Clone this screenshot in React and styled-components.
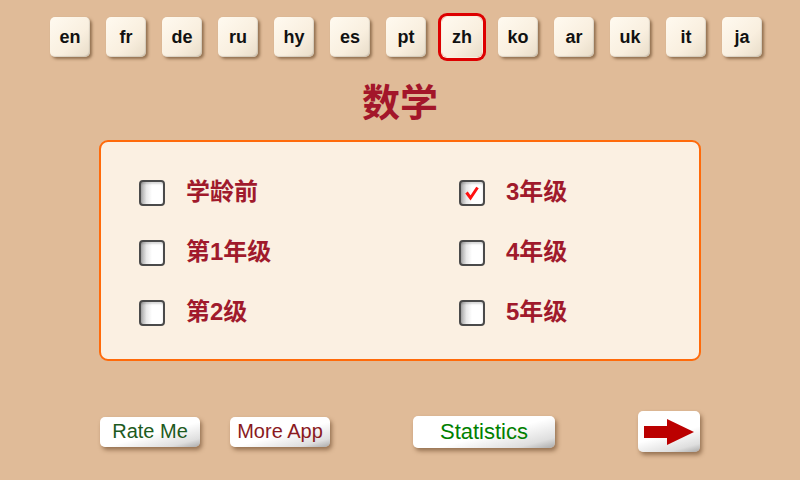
import React, { useState } from "react";
import styled, { createGlobalStyle } from "styled-components";

const GlobalStyle = createGlobalStyle`
  html, body {
    margin: 0;
    padding: 0;
    background-color: #e0bb98;
  }
  body {
    font-family: "Liberation Sans", "Noto Sans CJK SC", sans-serif;
  }
`;

const Page = styled.div`
  width: 800px;
  height: 480px;
  overflow: hidden;
  display: flex;
  flex-direction: column;
  align-items: center;
  background-color: #e0bb98;
`;

const LangRow = styled.div`
  display: flex;
  align-items: center;
  gap: 16px;
  height: 48px;
  margin: 13px 0 0 12px;
`;

const LangButton = styled.button`
  width: 40px;
  height: 40px;
  padding: 0;
  border: none;
  border-radius: 5px;
  background: linear-gradient(135deg, #fffaf0 0%, #f9efdf 60%, #e8dcc8 100%);
  box-shadow: ${({ $active }) =>
    $active
      ? "0 0 0 1px #f9efdf, 0 0 0 4px #dd0000"
      : "2px 2px 3px rgba(80, 50, 20, 0.55), inset -1px -1px 1px rgba(0,0,0,0.12)"};
  font-family: "Liberation Sans", Arial, sans-serif;
  font-weight: bold;
  font-size: 18px;
  color: #111;
  cursor: pointer;
  line-height: 40px;
`;

const Title = styled.h1`
  margin: 17px 0 0;
  height: 44px;
  line-height: 44px;
  font-family: "Noto Sans CJK SC", sans-serif;
  font-weight: bold;
  font-size: 38px;
  color: #a3162a;
`;

const Panel = styled.div`
  box-sizing: border-box;
  width: 602px;
  height: 221px;
  margin-top: 18px;
  border: 2px solid #ff6a0a;
  border-radius: 9px;
  background-color: #fbf0e2;
  padding: 38px 0 0 38px;
  display: grid;
  grid-template-columns: 320px 240px;
  grid-auto-rows: 60px;
`;

const Option = styled.label`
  display: flex;
  align-items: center;
  gap: 21px;
  height: 26px;
  cursor: pointer;
`;

const Box = styled.span`
  box-sizing: border-box;
  width: 26px;
  height: 26px;
  border: 2px solid #4a4a4a;
  border-radius: 4px;
  background: linear-gradient(90deg, #a8a8a8 0%, #e8e8e8 25%, #ffffff 50%);
  box-shadow: inset 0 2px 2px rgba(0, 0, 0, 0.15);
  display: flex;
  align-items: center;
  justify-content: center;
`;

const OptionText = styled.span`
  font-family: "Liberation Sans", "Noto Sans CJK SC", sans-serif;
  font-weight: bold;
  font-size: 24px;
  line-height: 26px;
  margin-top: -3px;
  color: #a01a2c;
`;

const BottomRow = styled.div`
  width: 600px;
  height: 41px;
  margin-top: 50px;
  display: flex;
  align-items: center;
  justify-content: space-between;
`;

const Group = styled.div`
  display: flex;
  align-items: center;
  gap: 30px;
`;

const WhiteButton = styled.button`
  box-sizing: border-box;
  width: ${({ $w }) => $w}px;
  height: ${({ $h }) => $h}px;
  padding: 0;
  border: none;
  border-radius: 5px;
  background: linear-gradient(165deg, #ffffff 0%, #ffffff 55%, #dedede 85%, #aaaaaa 100%);
  box-shadow: 2px 3px 4px rgba(90, 55, 25, 0.55);
  font-family: "Liberation Sans", Arial, sans-serif;
  font-size: ${({ $size }) => $size}px;
  color: ${({ $color }) => $color};
  cursor: pointer;
  display: flex;
  align-items: center;
  justify-content: center;
`;

const langs = ["en", "fr", "de", "ru", "hy", "es", "pt", "zh", "ko", "ar", "uk", "it", "ja"];

const grades = [
  ["学龄前", "3年级"],
  ["第1年级", "4年级"],
  ["第2级", "5年级"],
];

const Check = () => (
  <svg width="16" height="16" viewBox="0 0 16 16">
    <path d="M2.5 7.5 L6.5 13 L13.5 2.5" fill="none" stroke="#ff1010" strokeWidth="3" strokeLinejoin="miter" />
  </svg>
);

const Arrow = () => (
  <svg width="50" height="26" viewBox="0 0 50 26">
    <rect x="0" y="7" width="24" height="12" fill="#bb0000" />
    <polygon points="23,0 50,13 23,26" fill="#bb0000" />
  </svg>
);

export default function App() {
  const [lang, setLang] = useState("zh");
  const [checked, setChecked] = useState({ "3年级": true });

  const toggle = (k) => setChecked((prev) => ({ ...prev, [k]: !prev[k] }));

  return (
    <Page>
      <GlobalStyle />
      <LangRow>
        {langs.map((l) => (
          <LangButton key={l} $active={l === lang} onClick={() => setLang(l)}>
            {l}
          </LangButton>
        ))}
      </LangRow>
      <Title>数学</Title>
      <Panel>
        {grades.flat().map((g) => (
          <Option key={g} onClick={() => toggle(g)}>
            <Box>{checked[g] && <Check />}</Box>
            <OptionText>{g}</OptionText>
          </Option>
        ))}
      </Panel>
      <BottomRow>
        <Group>
          <WhiteButton $w={100} $h={30} $size={20} $color="#1d5a1d">Rate Me</WhiteButton>
          <WhiteButton $w={100} $h={30} $size={20} $color="#8a1a1e">More App</WhiteButton>
        </Group>
        <WhiteButton $w={142} $h={32} $size={22} $color="#008000">Statistics</WhiteButton>
        <WhiteButton $w={62} $h={41} $size={16} $color="#bb0000">
          <Arrow />
        </WhiteButton>
      </BottomRow>
    </Page>
  );
}
